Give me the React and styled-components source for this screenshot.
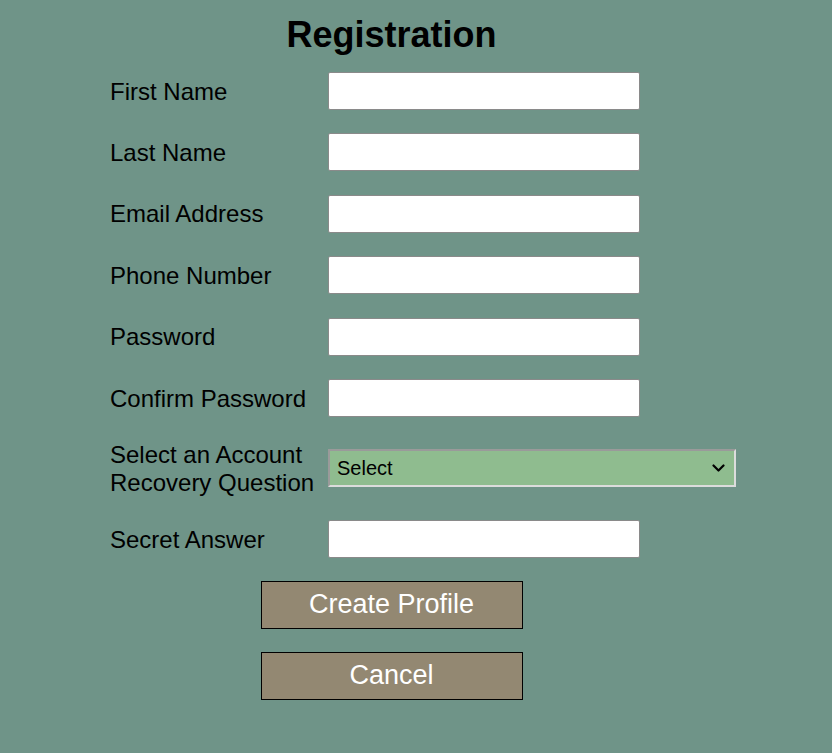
import React from "react";
import styled, { createGlobalStyle } from "styled-components";

const Global = createGlobalStyle`
  html, body { margin: 0; padding: 0; background: #6f9488; }
  body { font-family: "Liberation Sans", Arial, sans-serif; min-height: 753px; }
`;

const Page = styled.div`
  padding: 14px 0 40px 110px;
`;

const Form = styled.form`
  width: 563px;
  display: flex;
  flex-direction: column;
`;

const Title = styled.h1`
  margin: 0 0 17px;
  font-size: 36px;
  line-height: 41px;
  font-weight: bold;
  text-align: center;
  color: #000;
`;

const Fields = styled.div`
  display: grid;
  grid-template-columns: 218px auto;
  row-gap: 23.4px;
  align-items: center;
  justify-items: start;
`;

const Label = styled.label`
  font-size: 24px;
  line-height: 27.6px;
  padding-top: 1px;
  color: #000;
`;

const Input = styled.input`
  box-sizing: border-box;
  width: 312px;
  height: 38px;
  margin: 0;
  background: #fff;
  border: 1px solid #8a8a8a;
  border-radius: 2px;
  font-size: 18px;
  font-family: inherit;
`;

const SelectWrap = styled.div`
  position: relative;
  display: flex;
`;

const Select = styled.select`
  box-sizing: border-box;
  width: 408px;
  height: 38px;
  margin: 0;
  padding: 0 30px 0 7px;
  appearance: none;
  -webkit-appearance: none;
  background-color: #8fbc8f;
  border: 2px solid;
  border-color: #9a9a9a #dcdcdc #dcdcdc #9a9a9a;
  border-radius: 0;
  font-size: 20px;
  font-family: inherit;
  color: #000;
`;

const Chevron = styled.svg`
  position: absolute;
  right: 11px;
  top: 15px;
  width: 13px;
  height: 8px;
  pointer-events: none;
`;

const Buttons = styled.div`
  display: flex;
  flex-direction: column;
  align-items: center;
  gap: 23px;
  margin-top: 23px;
`;

const Button = styled.button`
  box-sizing: border-box;
  width: 262px;
  height: 48px;
  background: #938872;
  border: 1px solid #000;
  border-radius: 0;
  color: #fff;
  font-family: inherit;
  font-size: 27px;
  padding: 0;
  cursor: pointer;
`;

const fields = [
  "First Name",
  "Last Name",
  "Email Address",
  "Phone Number",
  "Password",
  "Confirm Password",
];

export default function App() {
  return (
    <>
      <Global />
      <Page>
        <Form onSubmit={(e) => e.preventDefault()}>
          <Title>Registration</Title>
          <Fields>
            {fields.map((f) => (
              <React.Fragment key={f}>
                <Label>{f}</Label>
                <Input type={f.includes("Password") ? "password" : "text"} />
              </React.Fragment>
            ))}
            <Label>
              Select an Account
              <br />
              Recovery Question
            </Label>
            <SelectWrap>
              <Select defaultValue="">
                <option value="">Select</option>
                <option>What was the name of your first pet?</option>
                <option>What city were you born in?</option>
              </Select>
              <Chevron viewBox="0 0 13 8" fill="none">
                <path d="M1.5 1.5 L6.5 6.5 L11.5 1.5" stroke="#000" strokeWidth="2.2" strokeLinecap="round" strokeLinejoin="round" />
              </Chevron>
            </SelectWrap>
            <Label>Secret Answer</Label>
            <Input type="text" />
          </Fields>
          <Buttons>
            <Button type="submit">Create Profile</Button>
            <Button type="button">Cancel</Button>
          </Buttons>
        </Form>
      </Page>
    </>
  );
}
